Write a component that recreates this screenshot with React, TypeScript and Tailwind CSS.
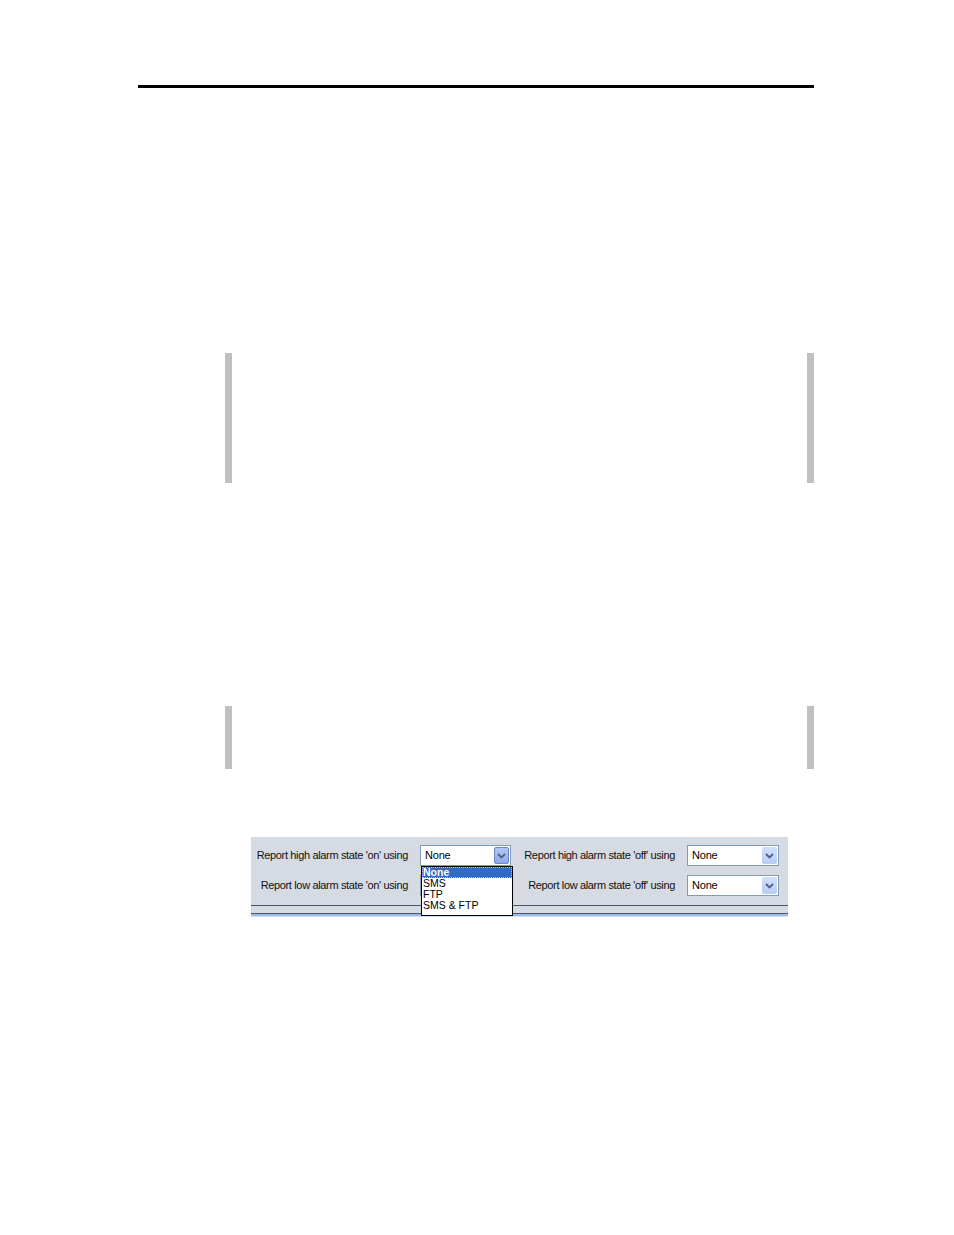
import React from 'react'

const font = { fontFamily: '"Liberation Sans", Arial, sans-serif' }

function Chevron() {
  return (
    <svg className="w-[9px] h-[6px]" viewBox="0 0 9 6" fill="none">
      <path d="M1 1l3.5 3.5L8 1" stroke="#4d6185" strokeWidth={1.8} />
    </svg>
  )
}

function Combo({ active = false, width }: { active?: boolean; width: string }) {
  return (
    <div
      className={`${width} h-[21px] flex items-center justify-between bg-white border border-[#7f9db9] pl-[4px] pr-[1px]`}
    >
      <span className="text-[11px] leading-none text-black tracking-[-0.2px]">None</span>
      <div
        className={`w-[15px] h-[17px] flex items-center justify-center rounded-[2px] ${
          active
            ? 'bg-gradient-to-b from-[#b3c6f3] to-[#8eaaee] border border-[#6d86c4]'
            : 'bg-gradient-to-b from-[#d3e0fb] to-[#b8cbf6]'
        }`}
      >
        <Chevron />
      </div>
    </div>
  )
}

function Label({ width, children }: { width: string; children: React.ReactNode }) {
  return (
    <div
      className={`${width} shrink-0 whitespace-nowrap text-right text-[11px] leading-none tracking-[-0.35px] text-[#111]`}
    >
      {children}
    </div>
  )
}

export default function App() {
  return (
    <div className="w-[954px] h-[1235px] bg-white overflow-hidden" style={font}>
      {/* header rule */}
      <div className="pt-[85px] pl-[138px]">
        <div className="w-[676px] h-[3px] bg-black" />
      </div>

      {/* blank quote blocks */}
      <div className="mt-[265px] ml-[225px] w-[589px] h-[130px] border-x-[7px] border-[#c0c0c0]" />
      <div className="mt-[223px] ml-[225px] w-[589px] h-[63px] border-x-[7px] border-[#c0c0c0]" />

      {/* alarm report panel */}
      <div className="mt-[68px] ml-[251px] w-[537px] relative">
        <div className="h-[69px] bg-[#d5dae3] pt-[8px] flex flex-col gap-[9px] border-b border-[#4c5569]">
          <div className="flex items-center">
            <Label width="w-[157px]">Report high alarm state 'on' using</Label>
            <div className="ml-[12px] shrink-0">
              <Combo active width="w-[91px]" />
            </div>
            <Label width="w-[164px]">Report high alarm state 'off' using</Label>
            <div className="ml-[12px] shrink-0">
              <Combo width="w-[92px]" />
            </div>
          </div>
          <div className="flex items-center">
            <Label width="w-[157px]">Report low alarm state 'on' using</Label>
            <div className="ml-[12px] shrink-0">
              <Combo width="w-[91px]" />
            </div>
            <Label width="w-[164px]">Report low alarm state 'off' using</Label>
            <div className="ml-[12px] shrink-0">
              <Combo width="w-[92px]" />
            </div>
          </div>
        </div>
        <div className="h-[7px] bg-[#d5dae3]" />
        <div className="h-[1px] bg-[#4c5569]" />
        <div className="h-[2px] bg-[#9dbce8]" />
        <div className="h-[1px] bg-[#cde0f8]" />

        {/* open dropdown list */}
        <div className="absolute left-[170px] top-[29px] w-[92px] h-[50px] bg-white border border-black text-[10.5px] leading-[11px] text-black">
          <div className="h-[11px] bg-[#316ac5] text-white font-semibold pl-[1px] outline outline-1 outline-dotted outline-[#f0c060] -outline-offset-1">
            None
          </div>
          <div className="h-[11px] pl-[1px]">SMS</div>
          <div className="h-[11px] pl-[1px]">FTP</div>
          <div className="h-[11px] pl-[1px]">SMS &amp; FTP</div>
        </div>
      </div>
    </div>
  )
}
